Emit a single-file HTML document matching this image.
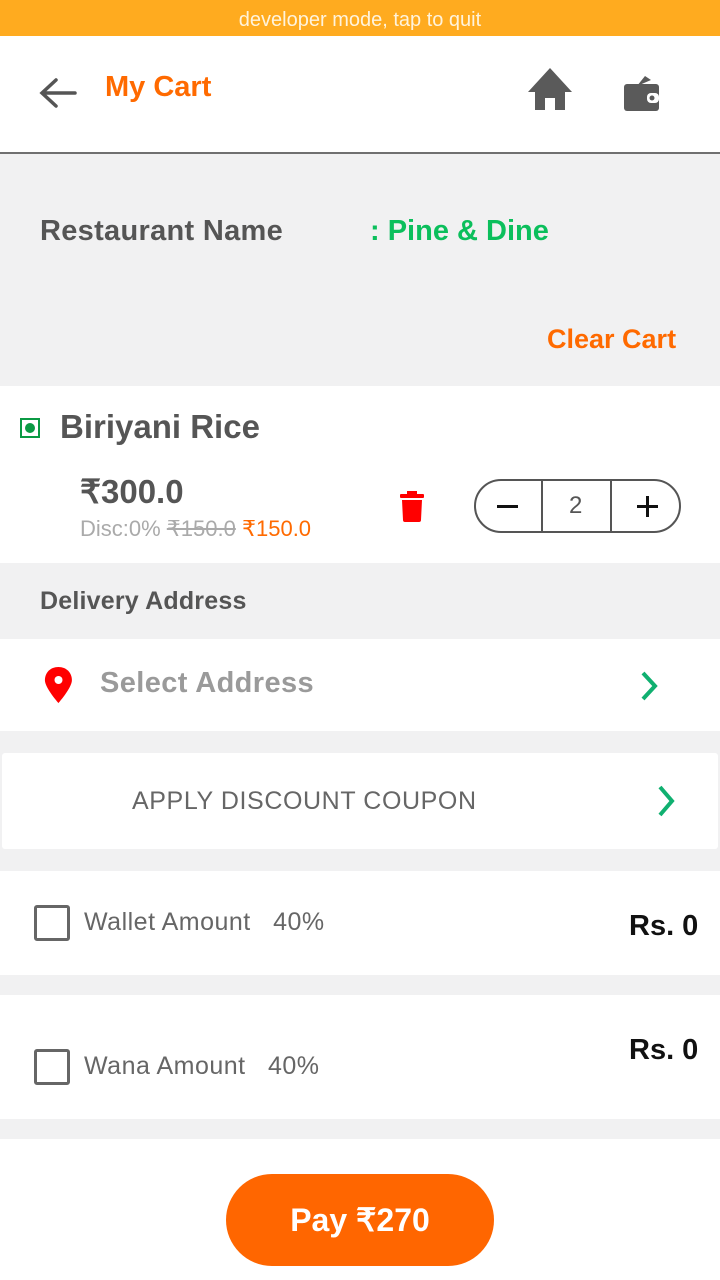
<!DOCTYPE html>
<html><head><meta charset="utf-8"><style>
*{margin:0;padding:0;box-sizing:border-box}
body{width:720px;height:1280px;background:#f1f1f2;font-family:"Liberation Sans",sans-serif;position:relative;overflow:hidden}
.a{position:absolute}
</style></head><body>
<div class="a" style="left:0;top:0;width:720px;height:36px;background:#ffab1f;color:#fff3dc;font-size:20px;text-align:center;line-height:40px">developer mode, tap to quit</div>
<div class="a" style="left:0;top:36px;width:720px;height:116px;background:#fff"></div>
<div class="a" style="left:0;top:152px;width:720px;height:2px;background:#707070"></div>
<svg class="a" style="left:38px;top:76px" width="40" height="34" viewBox="0 0 40 34"><path d="M37 17H5M18 4L4 17L18 30" stroke="#555" stroke-width="3.5" fill="none" stroke-linecap="round"/></svg>
<div class="a" style="left:105px;top:71px;font-size:29px;font-weight:bold;color:#ff6a00">My Cart</div>
<svg class="a" style="left:527px;top:68px" width="46" height="44" viewBox="0 0 46 44"><path d="M23 0L45 24H38V42H28V30H18V42H8V24H1Z" fill="#5a5a5a"/></svg>
<svg class="a" style="left:623px;top:74px" width="38" height="38" viewBox="0 0 38 38"><path d="M22 2L28 6L14 12Z" fill="#5a5a5a"/><rect x="1" y="10" width="35" height="27" rx="3" fill="#5a5a5a"/><rect x="24" y="19" width="12" height="10" rx="4" fill="#fff"/><circle cx="29" cy="24" r="2.5" fill="#5a5a5a"/></svg>
<div class="a" style="left:40px;top:215px;font-size:29px;font-weight:bold;color:#555;letter-spacing:0.3px">Restaurant Name</div>
<div class="a" style="left:370px;top:215px;font-size:29px;font-weight:bold;color:#0bbf5c">: Pine &amp; Dine</div>
<div class="a" style="left:547px;top:324px;font-size:27px;font-weight:bold;color:#ff6a00">Clear Cart</div>
<div class="a" style="left:0;top:386px;width:720px;height:177px;background:#fff"></div>
<div class="a" style="left:20px;top:418px;width:20px;height:20px;border:2px solid #0b9a44;"><div style="margin:3px;width:10px;height:10px;border-radius:50%;background:#0b9a44"></div></div>
<div class="a" style="left:60px;top:408px;font-size:33px;font-weight:bold;color:#555">Biriyani Rice</div>
<div class="a" style="left:80px;top:472px;font-size:33px;font-weight:bold;color:#555">₹300.0</div>
<div class="a" style="left:80px;top:516px;font-size:22px;color:#aaa">Disc:0% <s>₹150.0</s> <span style="color:#ff6a00">₹150.0</span></div>
<svg class="a" style="left:400px;top:490px" width="24" height="32" viewBox="0 0 24 32"><rect x="0" y="4" width="24" height="4" rx="1" fill="#f00"/><rect x="7" y="1" width="10" height="4" fill="#f00"/><path d="M2 10H22L21 30Q21 32 19 32H5Q3 32 3 30Z" fill="#f00"/></svg>
<div class="a" style="left:474px;top:479px;width:207px;height:54px;border:2px solid #555;border-radius:27px"></div>
<div class="a" style="left:541px;top:480px;width:2px;height:52px;background:#555"></div>
<div class="a" style="left:610px;top:480px;width:2px;height:52px;background:#555"></div>
<div class="a" style="left:497px;top:505px;width:21px;height:3px;background:#111"></div>
<div class="a" style="left:569px;top:492px;font-size:24px;color:#555">2</div>
<div class="a" style="left:637px;top:505px;width:21px;height:3px;background:#111"></div>
<div class="a" style="left:646px;top:496px;width:3px;height:21px;background:#111"></div>
<div class="a" style="left:40px;top:587px;font-size:25px;font-weight:bold;color:#555;letter-spacing:0.2px">Delivery Address</div>
<div class="a" style="left:0;top:639px;width:720px;height:92px;background:#fff"></div>
<svg class="a" style="left:44px;top:667px" width="30" height="38" viewBox="0 0 30 38"><path d="M15 0C6 0 0 6 0 14C0 22 15 38 15 38C15 38 30 22 30 14C30 6 24 0 15 0Z" fill="#f00" transform="scale(0.9 0.95) translate(1 0)"/><circle cx="14.5" cy="13" r="4" fill="#fff"/></svg>
<div class="a" style="left:100px;top:667px;font-size:29px;font-weight:bold;color:#9a9a9a;letter-spacing:0.4px">Select Address</div>
<svg class="a" style="left:638px;top:670px" width="24" height="32"><path d="M5 3L17 16L5 29" stroke="#10b070" stroke-width="4" fill="none"/></svg>
<div class="a" style="left:2px;top:753px;width:716px;height:96px;background:#fff;border-radius:3px"></div>
<div class="a" style="left:132px;top:787px;font-size:25px;color:#666;letter-spacing:0.6px">APPLY DISCOUNT COUPON</div>
<svg class="a" style="left:655px;top:784px" width="24" height="34"><path d="M5 3L17 17L5 31" stroke="#10b070" stroke-width="4" fill="none"/></svg>
<div class="a" style="left:0;top:871px;width:720px;height:104px;background:#fff"></div>
<div class="a" style="left:34px;top:905px;width:36px;height:36px;border:3px solid #666;border-radius:3px"></div>
<div class="a" style="left:84px;top:908px;font-size:25px;color:#666;letter-spacing:0.5px">Wallet Amount &nbsp; 40%</div>
<div class="a" style="left:629px;top:910px;font-size:29px;font-weight:bold;color:#111">Rs. 0</div>
<div class="a" style="left:0;top:995px;width:720px;height:124px;background:#fff"></div>
<div class="a" style="left:34px;top:1049px;width:36px;height:36px;border:3px solid #666;border-radius:3px"></div>
<div class="a" style="left:84px;top:1052px;font-size:25px;color:#666;letter-spacing:0.5px">Wana Amount &nbsp; 40%</div>
<div class="a" style="left:629px;top:1034px;font-size:29px;font-weight:bold;color:#111">Rs. 0</div>
<div class="a" style="left:0;top:1139px;width:720px;height:141px;background:#fff"></div>
<div class="a" style="left:226px;top:1174px;width:268px;height:92px;border-radius:46px;background:#ff6600;color:#fff;font-size:32px;font-weight:bold;text-align:center;line-height:92px">Pay ₹270</div>
</body></html>
